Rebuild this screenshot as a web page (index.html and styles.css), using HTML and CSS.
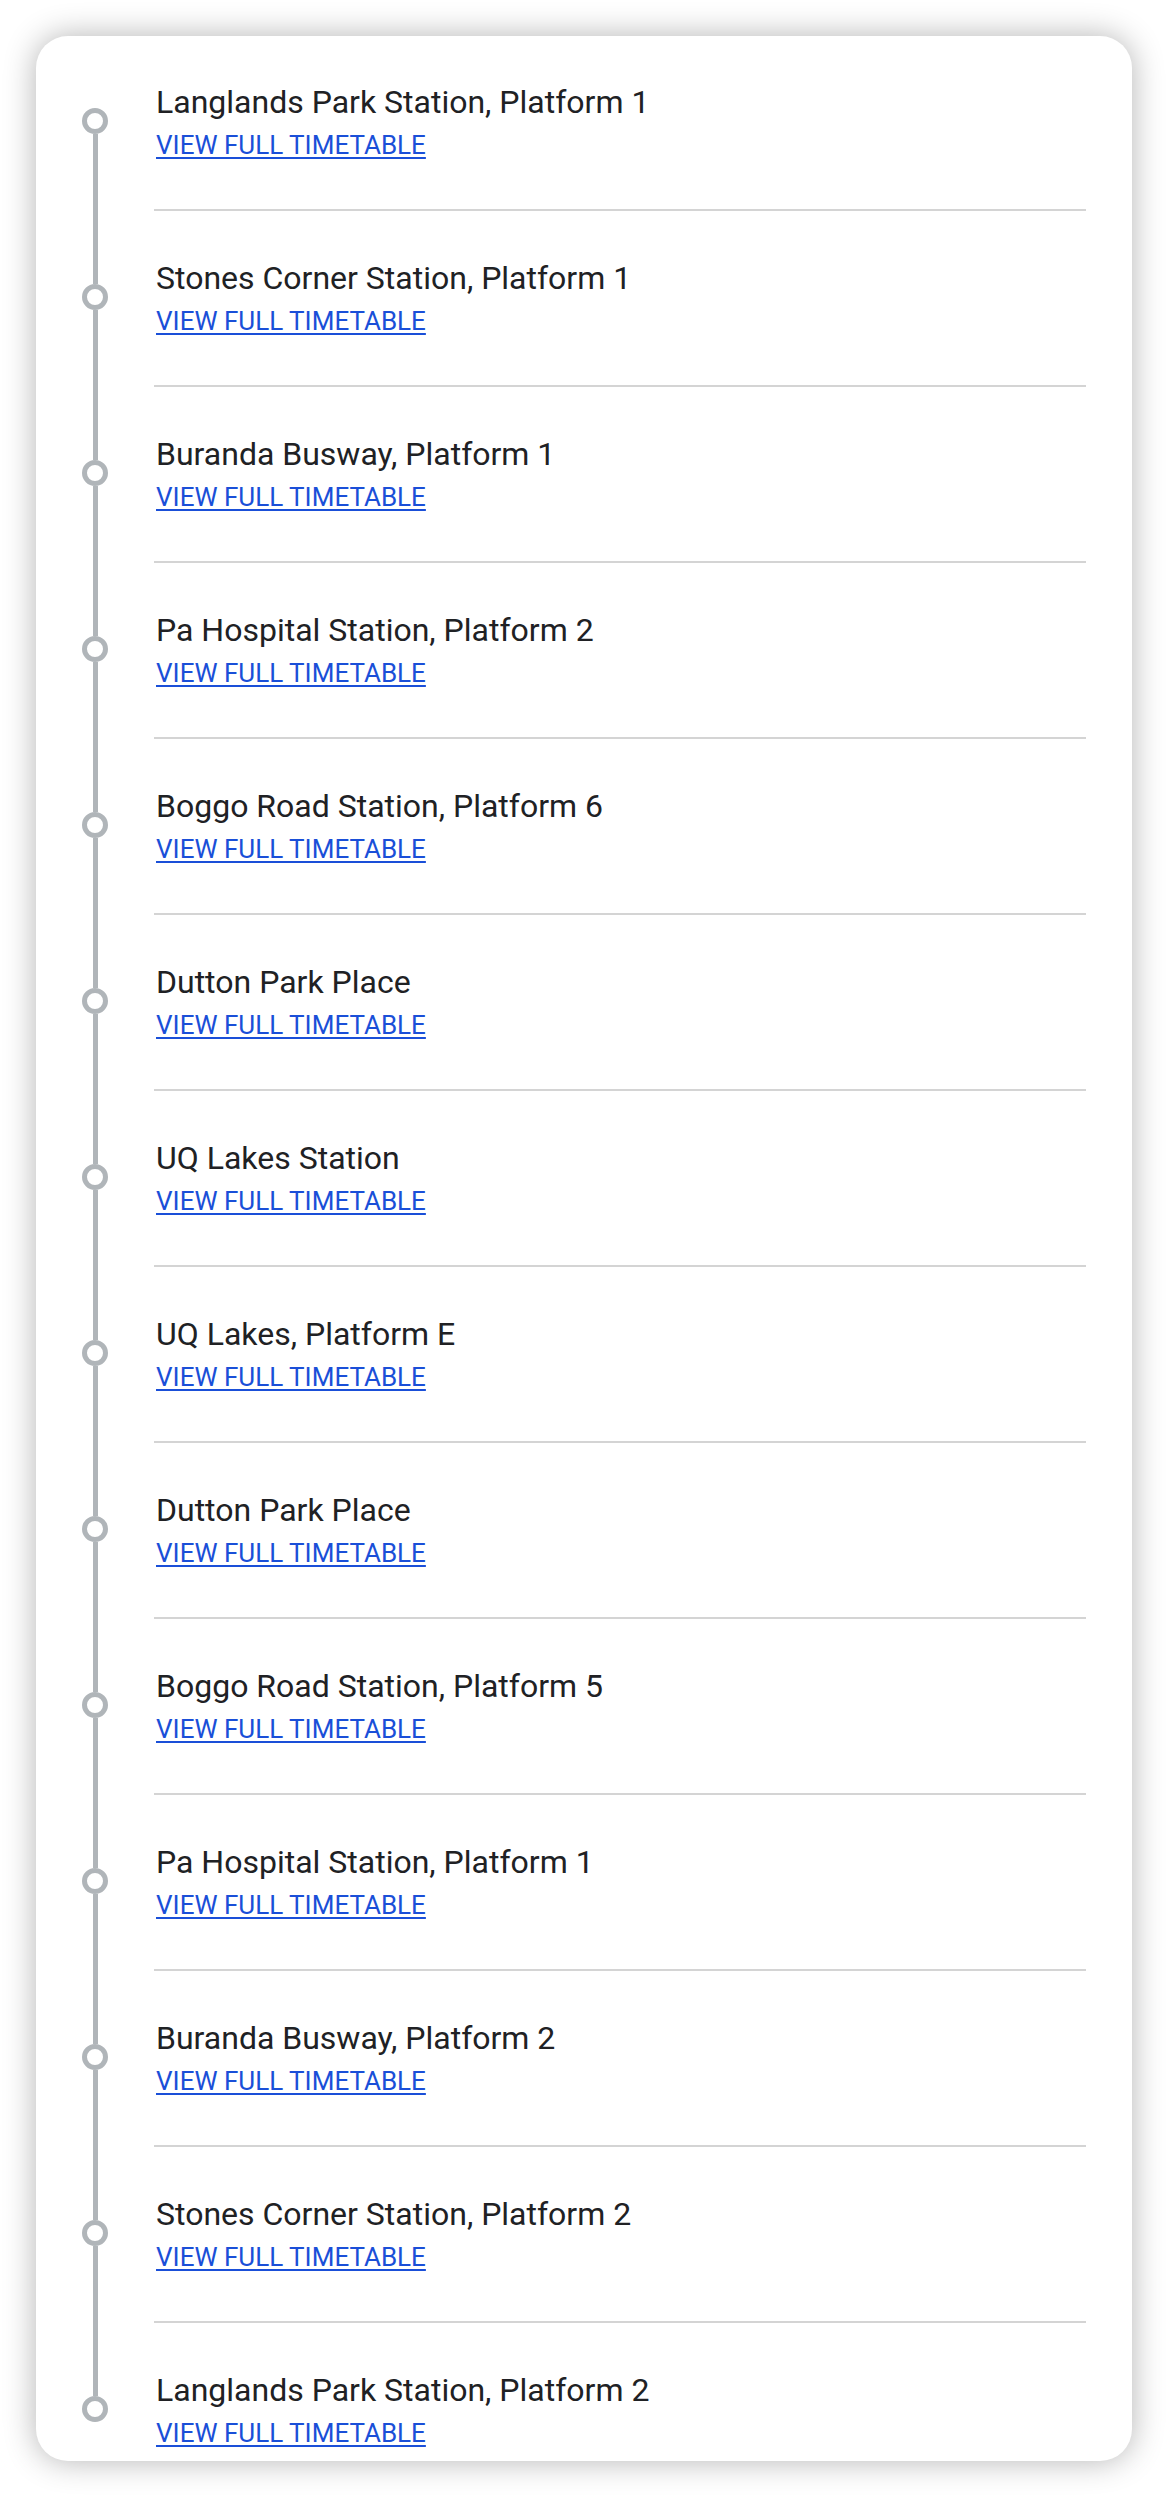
FILE: index.html
```html
<!DOCTYPE html>
<html lang="en">
<head>
<meta charset="utf-8">
<title>Stops</title>
<link rel="stylesheet" href="styles.css">
</head>
<body>
<main class="card">
  <ol class="stops">
    <li class="stop first">
      <div class="rail"><span class="seg seg-top"></span><span class="dot"></span><span class="seg seg-bottom"></span></div>
      <div class="info"><div class="name">Langlands Park Station, Platform 1</div><a class="link" href="#">VIEW FULL TIMETABLE</a></div>
    </li>
    <li class="stop">
      <div class="rail"><span class="seg seg-top"></span><span class="dot"></span><span class="seg seg-bottom"></span></div>
      <div class="info"><div class="name">Stones Corner Station, Platform 1</div><a class="link" href="#">VIEW FULL TIMETABLE</a></div>
    </li>
    <li class="stop">
      <div class="rail"><span class="seg seg-top"></span><span class="dot"></span><span class="seg seg-bottom"></span></div>
      <div class="info"><div class="name">Buranda Busway, Platform 1</div><a class="link" href="#">VIEW FULL TIMETABLE</a></div>
    </li>
    <li class="stop">
      <div class="rail"><span class="seg seg-top"></span><span class="dot"></span><span class="seg seg-bottom"></span></div>
      <div class="info"><div class="name">Pa Hospital Station, Platform 2</div><a class="link" href="#">VIEW FULL TIMETABLE</a></div>
    </li>
    <li class="stop">
      <div class="rail"><span class="seg seg-top"></span><span class="dot"></span><span class="seg seg-bottom"></span></div>
      <div class="info"><div class="name">Boggo Road Station, Platform 6</div><a class="link" href="#">VIEW FULL TIMETABLE</a></div>
    </li>
    <li class="stop">
      <div class="rail"><span class="seg seg-top"></span><span class="dot"></span><span class="seg seg-bottom"></span></div>
      <div class="info"><div class="name">Dutton Park Place</div><a class="link" href="#">VIEW FULL TIMETABLE</a></div>
    </li>
    <li class="stop">
      <div class="rail"><span class="seg seg-top"></span><span class="dot"></span><span class="seg seg-bottom"></span></div>
      <div class="info"><div class="name">UQ Lakes Station</div><a class="link" href="#">VIEW FULL TIMETABLE</a></div>
    </li>
    <li class="stop">
      <div class="rail"><span class="seg seg-top"></span><span class="dot"></span><span class="seg seg-bottom"></span></div>
      <div class="info"><div class="name">UQ Lakes, Platform E</div><a class="link" href="#">VIEW FULL TIMETABLE</a></div>
    </li>
    <li class="stop">
      <div class="rail"><span class="seg seg-top"></span><span class="dot"></span><span class="seg seg-bottom"></span></div>
      <div class="info"><div class="name">Dutton Park Place</div><a class="link" href="#">VIEW FULL TIMETABLE</a></div>
    </li>
    <li class="stop">
      <div class="rail"><span class="seg seg-top"></span><span class="dot"></span><span class="seg seg-bottom"></span></div>
      <div class="info"><div class="name">Boggo Road Station, Platform 5</div><a class="link" href="#">VIEW FULL TIMETABLE</a></div>
    </li>
    <li class="stop">
      <div class="rail"><span class="seg seg-top"></span><span class="dot"></span><span class="seg seg-bottom"></span></div>
      <div class="info"><div class="name">Pa Hospital Station, Platform 1</div><a class="link" href="#">VIEW FULL TIMETABLE</a></div>
    </li>
    <li class="stop">
      <div class="rail"><span class="seg seg-top"></span><span class="dot"></span><span class="seg seg-bottom"></span></div>
      <div class="info"><div class="name">Buranda Busway, Platform 2</div><a class="link" href="#">VIEW FULL TIMETABLE</a></div>
    </li>
    <li class="stop">
      <div class="rail"><span class="seg seg-top"></span><span class="dot"></span><span class="seg seg-bottom"></span></div>
      <div class="info"><div class="name">Stones Corner Station, Platform 2</div><a class="link" href="#">VIEW FULL TIMETABLE</a></div>
    </li>
    <li class="stop last">
      <div class="rail"><span class="seg seg-top"></span><span class="dot"></span><span class="seg seg-bottom"></span></div>
      <div class="info"><div class="name">Langlands Park Station, Platform 2</div><a class="link" href="#">VIEW FULL TIMETABLE</a></div>
    </li>
  </ol>
</main>
</body>
</html>
```

FILE: styles.css
```css
html, body {
  margin: 0;
  padding: 0;
  background: #ffffff;
}

body {
  font-family: Roboto, "Liberation Sans", sans-serif;
  color: #202124;
}

.card {
  margin: 36px;
  background: #ffffff;
  border-radius: 32px;
  box-shadow: 0 0 32px rgba(0, 0, 0, 0.3);
  overflow: hidden;
}

.stops {
  list-style: none;
  margin: 0;
  padding: 0;
}

.stop {
  display: flex;
  align-items: stretch;
}

.rail {
  width: 118px;
  flex: none;
  display: flex;
  flex-direction: column;
  align-items: center;
}

.seg {
  display: block;
  width: 5px;
  background: #b0b5b9;
}

.seg-top {
  height: 73px;
  flex: none;
}

.first .seg-top {
  height: 72px;
}

.seg-bottom {
  flex: 1;
}

.first .seg-top,
.last .seg-bottom {
  background: transparent;
}

.dot {
  display: block;
  flex: none;
  width: 16px;
  height: 16px;
  border: 5.5px solid #b0b5b9;
  border-radius: 50%;
  background: #ffffff;
}

.info {
  flex: 1;
  margin-right: 46px;
  padding: 43px 0 44px 2px;
  border-bottom: 2px solid #d4d4d4;
}

.first .info {
  padding-top: 42px;
}

.last .info {
  border-bottom: none;
  padding-bottom: 8px;
}

.name {
  font-size: 32px;
  line-height: 48px;
  color: #202124;
}

.link {
  display: inline-block;
  font-size: 26px;
  line-height: 39px;
  color: #1a4fd8;
  text-decoration: underline;
  text-decoration-thickness: 2px;
  text-underline-offset: 3px;
}
```
